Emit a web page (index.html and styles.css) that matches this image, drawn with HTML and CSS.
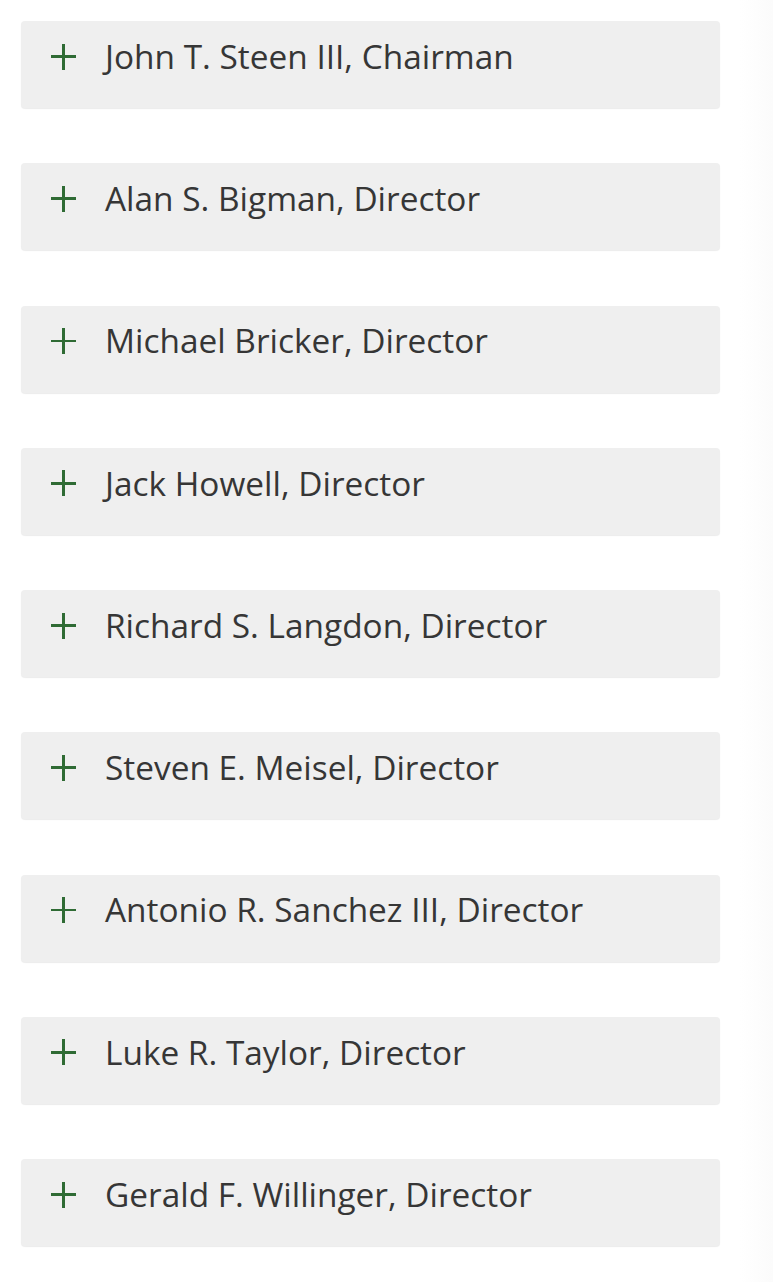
FILE: index.html
```html
<!DOCTYPE html>
<html lang="en">
<head>
<meta charset="utf-8">
<title>Board of Directors</title>
<link rel="stylesheet" href="styles.css">
</head>
<body>
<div class="accordion">
  <div class="item"><span class="plus"></span><span class="name">John T. Steen III, Chairman</span></div>
  <div class="item"><span class="plus"></span><span class="name">Alan S. Bigman, Director</span></div>
  <div class="item"><span class="plus"></span><span class="name">Michael Bricker, Director</span></div>
  <div class="item"><span class="plus"></span><span class="name">Jack Howell, Director</span></div>
  <div class="item"><span class="plus"></span><span class="name">Richard S. Langdon, Director</span></div>
  <div class="item"><span class="plus"></span><span class="name">Steven E. Meisel, Director</span></div>
  <div class="item"><span class="plus"></span><span class="name">Antonio R. Sanchez III, Director</span></div>
  <div class="item"><span class="plus"></span><span class="name">Luke R. Taylor, Director</span></div>
  <div class="item"><span class="plus"></span><span class="name">Gerald F. Willinger, Director</span></div>
</div>
</body>
</html>
```

FILE: styles.css
```css
html, body {
  margin: 0;
  padding: 0;
}
body {
  background: linear-gradient(to right, #ffffff 0, #ffffff 740px, #fbfbfb 773px);
  font-family: "Open Sans", "Liberation Sans", sans-serif;
  min-height: 1282px;
}
.accordion {
  display: flex;
  flex-direction: column;
  gap: 55.25px;
  padding: 21px 0 0 21px;
  width: 699px;
}
.item {
  height: 87px;
  box-sizing: border-box;
  background: #efefef;
  border-radius: 4px;
  box-shadow: 0 1px 1px rgba(0, 0, 0, 0.08);
  display: flex;
  align-items: center;
  padding: 0 0 16px 30px;
}
.plus {
  position: relative;
  width: 25px;
  height: 26px;
  flex: none;
  margin-right: 29px;
}
.plus::before,
.plus::after {
  content: "";
  position: absolute;
  background: #2f6b34;
}
.plus::before {
  left: 0;
  right: 0;
  top: 11.7px;
  height: 2.6px;
}
.plus::after {
  top: 0;
  bottom: 0;
  left: 11.2px;
  width: 2.6px;
}
.name {
  font-size: 33.4px;
  color: #363636;
  line-height: 1;
}
```
